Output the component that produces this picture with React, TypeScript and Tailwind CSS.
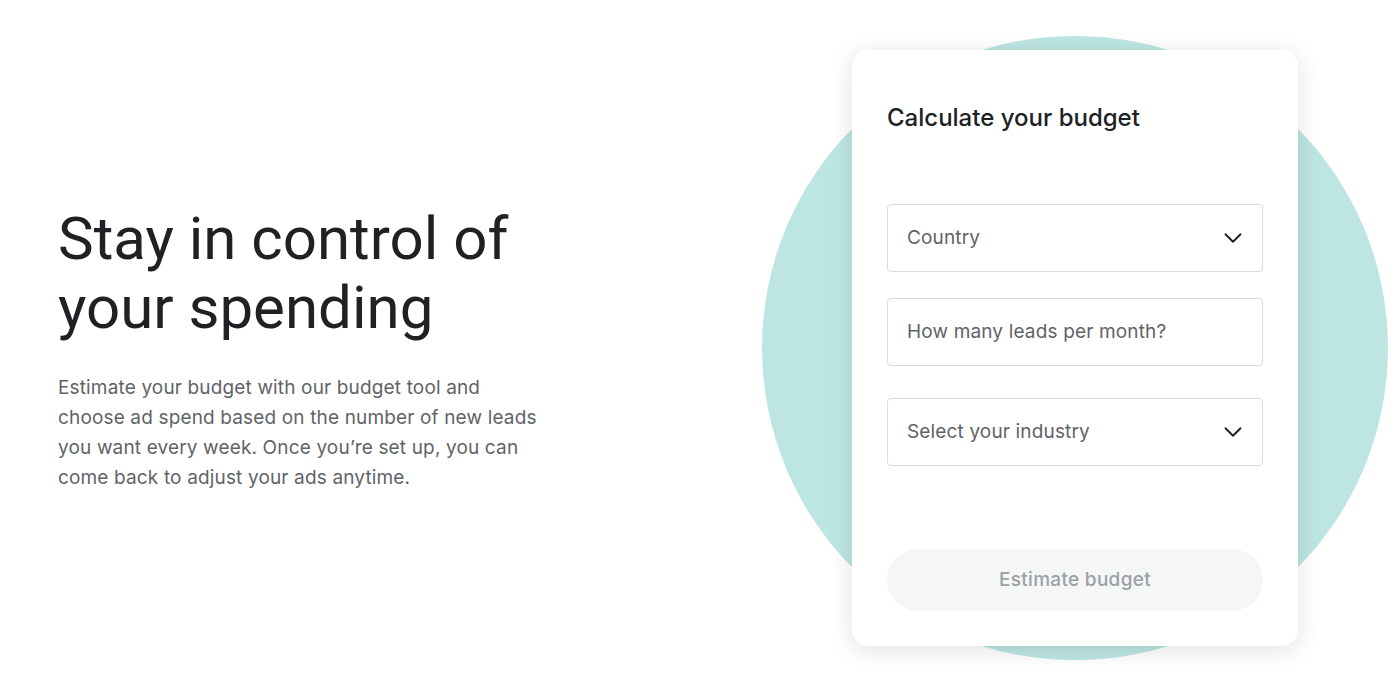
import React from "react";
import { ChevronDown } from "lucide-react";

const heading = { fontFamily: 'Roboto, "Noto Sans", Arial, sans-serif' };
const body = { fontFamily: 'Inter, "Noto Sans", Arial, sans-serif' };

function Field({ label, chevron }: { label: string; chevron?: boolean }) {
  return (
    <div className="flex h-[68px] items-center justify-between rounded-[4px] border border-[#dadce0] bg-white pl-[19px] pr-[14px]">
      <span className="text-[19px] tracking-[0.15px] text-[#5f6368]">{label}</span>
      {chevron && <ChevronDown size={30} strokeWidth={1.5} className="text-[#202124]" />}
    </div>
  );
}

export default function App() {
  return (
    <div className="flex h-[700px] w-[1400px] items-start justify-between bg-white" style={body}>
      <div className="pl-[58px] pt-[204px]">
        <h1 className="text-[60px] font-normal leading-[69px] text-[#202124]" style={heading}>
          Stay in control of
          <br />
          your spending
        </h1>
        <p className="mt-[31px] text-[19px] leading-[30px] tracking-[0.15px] text-[#5f6368]">
          Estimate your budget with our budget tool and
          <br />
          choose ad spend based on the number of new leads
          <br />
          you want every week. Once you’re set up, you can
          <br />
          come back to adjust your ads anytime.
        </p>
      </div>
      <div className="relative mr-[12px] mt-[36px] flex h-[624px] w-[626px] items-center justify-center">
        <div className="absolute inset-0 rounded-full bg-[#bde6e3]" />
        <div className="relative flex h-[596px] w-[446px] flex-col rounded-[16px] bg-white px-[35px] pt-[52px] shadow-[0_4px_24px_rgba(0,0,0,0.12)]">
          <h2 className="text-[24px] font-medium leading-[32px] text-[#202124]">Calculate your budget</h2>
          <div className="mt-[70px] flex flex-col">
            <Field label="Country" chevron />
            <div className="h-[26px]" />
            <Field label="How many leads per month?" />
            <div className="h-[32px]" />
            <Field label="Select your industry" chevron />
          </div>
          <button className="mt-[83px] h-[62px] w-full rounded-full bg-[#f5f7f6] text-[19px] font-medium tracking-[0.3px] text-[#9aa0a6]">
            Estimate budget
          </button>
        </div>
      </div>
    </div>
  );
}
